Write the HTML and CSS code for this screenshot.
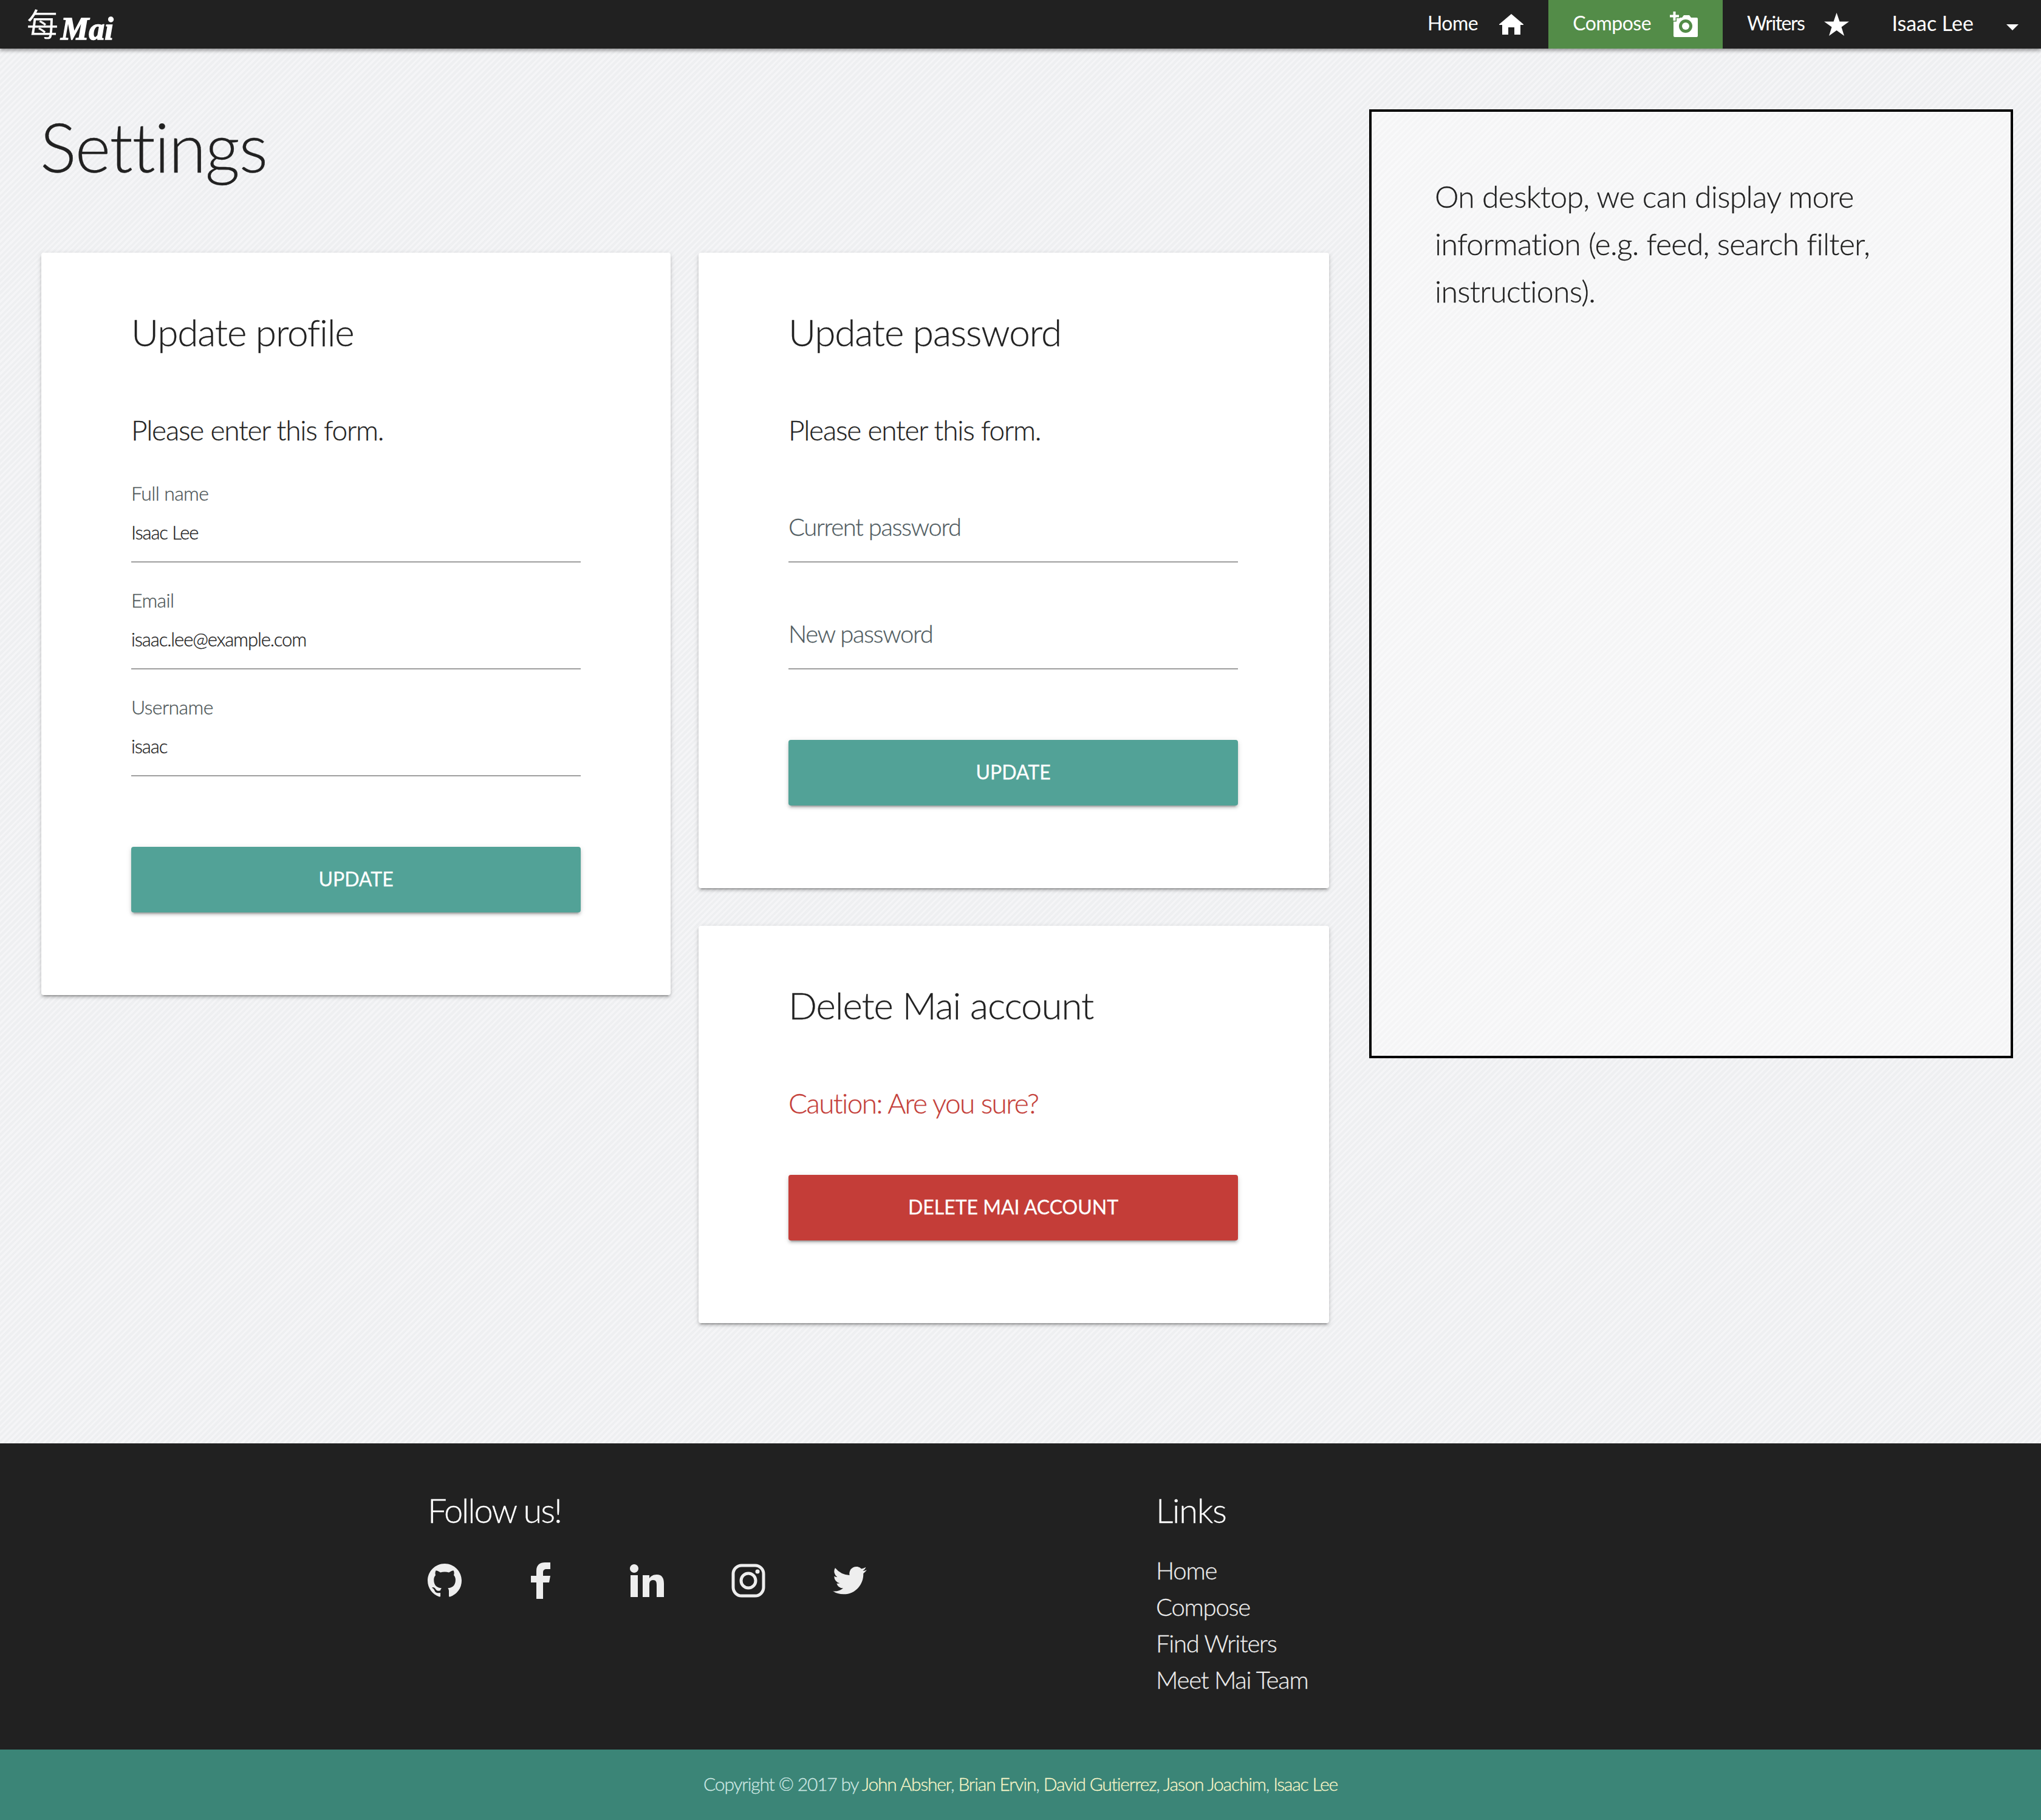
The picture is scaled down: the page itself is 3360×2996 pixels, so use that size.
FILE: index.html
```
<!DOCTYPE html>
<html lang="en">
<head>
  <meta charset="utf-8">
  <title>Mai - Settings</title>
  <link rel="stylesheet" href="styles.css">
</head>
<body>

  <nav class="navbar">
    <a class="logo" href="#"><span class="logo-han">每</span><span class="logo-word">Mai</span></a>
    <ul class="nav-links">
      <li class="nav-item nav-home">
        <a href="#">Home</a>
        <svg class="nav-icon" width="40" height="34" viewBox="0 0 40 34"><path fill="#fff" d="M20 0 L40 17 V18 H35 V34 H25 V22 H15 V34 H5 V18 H0 V17 Z"/></svg>
      </li>
      <li class="nav-item nav-compose">
        <a href="#">Compose</a>
        <svg class="nav-icon" width="46" height="42" viewBox="0 0 46 42">
          <path fill="#fff" d="M8 10h12l3-4h9l3 4h9q2 0 2 2v28q0 2-2 2H8q-2 0-2-2V12q0-2 2-2z"/>
          <circle cx="26" cy="24" r="11" fill="#538c48"/>
          <circle cx="26" cy="24" r="6" fill="#fff"/>
          <path fill="#fff" stroke="#538c48" stroke-width="3" paint-order="stroke" d="M5.500 0h4v5.500H15v4H9.500V15h-4V9.500H0v-4h5.500z"/>
        </svg>
      </li>
      <li class="nav-item nav-writers">
        <a href="#">Writers</a>
        <svg class="nav-icon" width="41" height="38" viewBox="0 0 41 38"><path fill="#fff" d="M20.500 0 L25.500 14.500 H41 L28.500 23.500 L33 38 L20.500 29 L8 38 L12.500 23.500 L0 14.500 H15.500 Z"/></svg>
      </li>
      <li class="nav-item nav-user">
        <a href="#">Isaac Lee</a>
        <span class="caret"></span>
      </li>
    </ul>
  </nav>

  <main class="page">
    <section class="content">
      <h1 class="page-title">Settings</h1>
      <div class="card-grid">
        <div class="card-col">
          <form class="card">
            <h3 class="card-title">Update profile</h3>
            <p class="card-text">Please enter this form.</p>
            <div class="field">
              <label class="field-label">Full name</label>
              <div class="field-value">Isaac Lee</div>
            </div>
            <div class="field">
              <label class="field-label">Email</label>
              <div class="field-value">isaac.lee@example.com</div>
            </div>
            <div class="field">
              <label class="field-label">Username</label>
              <div class="field-value">isaac</div>
            </div>
            <button class="btn" type="button">Update</button>
          </form>
        </div>
        <div class="card-col card-col-wide">
          <form class="card">
            <h3 class="card-title">Update password</h3>
            <p class="card-text">Please enter this form.</p>
            <div class="field">
              <div class="field-placeholder">Current password</div>
            </div>
            <div class="field">
              <div class="field-placeholder">New password</div>
            </div>
            <button class="btn" type="button">Update</button>
          </form>
          <form class="card">
            <h3 class="card-title">Delete Mai account</h3>
            <p class="card-text card-caution">Caution: Are you sure?</p>
            <button class="btn btn-danger" type="button">Delete Mai account</button>
          </form>
        </div>
      </div>
    </section>
    <aside class="sidebar">
      <p>On desktop, we can display more information (e.g. feed, search filter, instructions).</p>
    </aside>
  </main>

  <footer>
    <div class="footer-main">
      <div class="follow">
        <h4 class="footer-title">Follow us!</h4>
        <div class="social">
          <svg width="56" height="56" viewBox="0 0 16 16"><path fill="#eee" d="M8 0C3.580 0 0 3.580 0 8c0 3.540 2.290 6.530 5.470 7.590.4.070.55-.17.55-.38 0-.19-.01-.82-.01-1.490-2.010.37-2.530-.49-2.690-.94-.09-.23-.48-.94-.82-1.130-.28-.15-.68-.52-.01-.53.630-.01 1.080.58 1.230.82.720 1.210 1.870.87 2.330.66.070-.52.280-.87.510-1.070-1.780-.2-3.640-.89-3.640-3.950 0-.87.310-1.590.82-2.150-.08-.2-.36-1.020.08-2.120 0 0 .67-.21 2.200.82.640-.18 1.320-.27 2-.27s1.360.09 2 .27c1.530-1.040 2.200-.82 2.200-.82.440 1.100.160 1.920.08 2.120.51.560.82 1.270.82 2.150 0 3.070-1.870 3.750-3.650 3.950.29.250.54.730.54 1.480 0 1.070-.01 1.930-.01 2.200 0 .21.150.46.550.38A8.010 8.010 0 0 0 16 8c0-4.420-3.580-8-8-8z"/></svg>
          <svg class="social-f" width="32" height="60" viewBox="0 0 32 60"><path fill="#eee" d="M9 60V33H0V22h9v-8C9 4 15 0 23 0h9v11h-6c-4 0-6 2-6 5v6h12l-2 11H20v27z"/></svg>
          <svg class="social-in" width="56" height="54" viewBox="0 0 56 54"><path fill="#eee" d="M1 18h12v36H1z M7 0a7 7 0 1 1-0.010 0z M21 18h11v5c2-3 6-6 12-6 9 0 12 6 12 15v22H44V34c0-5-1-8-6-8s-6 4-6 8v20H21z"/></svg>
          <svg width="56" height="56" viewBox="0 0 56 56"><rect x="3" y="3" width="50" height="50" rx="14" fill="none" stroke="#eee" stroke-width="5"/><circle cx="28" cy="28" r="12" fill="none" stroke="#eee" stroke-width="5"/><circle cx="43" cy="13" r="3.500" fill="#eee"/></svg>
          <svg width="56" height="48" viewBox="0 0 24 20"><path fill="#eee" d="M24 2.400a9.800 9.800 0 0 1-2.830.78A4.940 4.940 0 0 0 23.340.46a9.900 9.900 0 0 1-3.130 1.190 4.930 4.930 0 0 0-8.390 4.490A14 14 0 0 1 1.670.99a4.930 4.930 0 0 0 1.520 6.570 4.900 4.900 0 0 1-2.230-.62v.06a4.930 4.930 0 0 0 3.950 4.830 4.900 4.900 0 0 1-2.220.08 4.930 4.930 0 0 0 4.600 3.420A9.880 9.880 0 0 1 0 17.370 13.940 13.940 0 0 0 7.550 19.580c9.060 0 14-7.500 14-14 0-.21 0-.42-.01-.64A10 10 0 0 0 24 2.400z"/></svg>
        </div>
      </div>
      <div class="links">
        <h4 class="footer-title footer-title-links">Links</h4>
        <ul class="link-list">
          <li><a href="#">Home</a></li>
          <li><a href="#">Compose</a></li>
          <li><a href="#">Find Writers</a></li>
          <li><a href="#">Meet Mai Team</a></li>
        </ul>
      </div>
    </div>
    <div class="copyright">Copyright © 2017 by <a href="#">John Absher</a>, <a href="#">Brian Ervin</a>, <a href="#">David Gutierrez</a>, <a href="#">Jason Joachim</a>, <a href="#">Isaac Lee</a></div>
  </footer>

</body>
</html>
```
FILE: styles.css
```
* {
  box-sizing: border-box;
}

body {
  margin: 0;
  font-family: "Lato", "Open Sans", sans-serif;
  font-weight: 300;
  font-variant-ligatures: none;
  -webkit-text-stroke: 0.3px;
  color: #212121;
  background-color: #f0f1f3;
  background-image: repeating-linear-gradient(135deg, rgba(255,255,255,0.3) 0, rgba(255,255,255,0.3) 3px, rgba(0,0,0,0.008) 3px, rgba(0,0,0,0.008) 7px);
}

a {
  color: inherit;
  text-decoration: none;
}

.navbar {
  height: 80px;
  background: #212121;
  display: flex;
  justify-content: space-between;
  box-shadow: 0 3px 6px rgba(0, 0, 0, 0.4);
  color: #fff;
  font-size: 32px;
  font-weight: 400;
  -webkit-text-stroke: 0;
}

.logo {
  display: flex;
  align-items: flex-end;
  padding: 0 0 12px 44px;
}

.logo-han {
  align-self: flex-start;
  font-family: "Noto Sans CJK SC", sans-serif;
  font-weight: 400;
  font-size: 52px;
  line-height: 75px;
  margin-right: 4px;
}

.logo-word {
  font-family: "Liberation Serif", serif;
  font-style: italic;
  font-weight: 700;
  font-size: 52px;
  line-height: 40px;
  -webkit-text-stroke: 1.5px #fff;
}

.nav-links {
  list-style: none;
  display: flex;
  margin: 0;
  padding: 0;
  height: 80px;
}

.nav-item {
  display: flex;
  align-items: center;
  gap: 35px;
  padding: 0 41px;
  letter-spacing: -0.5px;
}

.nav-item a {
  margin-bottom: 6px;
}

.nav-compose {
  background: #538c48;
  gap: 31px;
  padding-left: 40px;
}

.nav-writers {
  padding: 0 0 0 40px;
  gap: 33px;
  letter-spacing: -1.5px;
}

.nav-user {
  font-size: 34px;
  letter-spacing: 0;
  gap: 54px;
  padding: 0 37px 0 70px;
}

.caret {
  width: 0;
  height: 0;
  border-left: 10px solid transparent;
  border-right: 10px solid transparent;
  border-top: 10px solid #fff;
  margin-top: 10px;
}

.page {
  display: flex;
  align-items: flex-start;
  gap: 66px;
  padding: 0 46px 198px 68px;
}

.content {
  width: 2120px;
}

.page-title {
  margin: 0 0 0 -2px;
  height: 336px;
  padding-top: 101px;
  font-size: 112px;
  line-height: 120px;
  font-weight: 300;
  letter-spacing: -1.5px;
}

.card-grid {
  display: grid;
  grid-template-columns: 1036px 1038px;
  gap: 46px;
  align-items: start;
}

.card-col {
  display: flex;
  flex-direction: column;
  gap: 62px;
}

.card {
  background: #fff;
  border-radius: 4px;
  padding: 92px 148px 136px;
  box-shadow: 0 4px 4px rgba(0,0,0,0.14), 0 6px 2px -4px rgba(0,0,0,0.2), 0 2px 10px rgba(0,0,0,0.12);
}

.card-col-wide .card {
  padding-right: 150px;
}

.card-title {
  margin: 0 0 92px;
  font-size: 62px;
  line-height: 76px;
  font-weight: 300;
  letter-spacing: -1.1px;
}

.card-text {
  margin: 0 0 10px;
  font-size: 46px;
  line-height: 64px;
  font-weight: 300;
  letter-spacing: -1.2px;
}

.card-caution {
  color: #c43d38;
  margin-bottom: 86px;
  letter-spacing: -1.6px;
}

.field {
  height: 176px;
  display: flex;
  flex-direction: column;
  justify-content: flex-end;
}

.field-label {
  font-size: 32px;
  line-height: 40px;
  letter-spacing: -0.6px;
  color: #4c5557;
}

.field-value {
  margin-top: 24px;
  height: 70px;
  font-size: 31px;
  line-height: 40px;
  letter-spacing: -1.1px;
  border-bottom: 2px solid #9e9e9e;
}

.field-placeholder {
  height: 83px;
  font-size: 40px;
  line-height: 48px;
  letter-spacing: -1.4px;
  color: #4f5b5f;
  border-bottom: 2px solid #9e9e9e;
}

.btn {
  display: block;
  width: 100%;
  height: 108px;
  margin-top: 116px;
  padding: 0 0 4px;
  border: 0;
  border-radius: 4px;
  background: #52a297;
  color: #fff;
  font-family: inherit;
  font-size: 32px;
  font-weight: 400;
  text-transform: uppercase;
  box-shadow: 0 4px 4px rgba(0,0,0,0.14), 0 6px 2px -4px rgba(0,0,0,0.2), 0 2px 10px rgba(0,0,0,0.12);
}

.btn-danger {
  background: #c43d38;
  margin-top: 0;
}

.sidebar {
  width: 1060px;
  height: 1562px;
  margin-top: 100px;
  border: 4px solid #000;
  padding: 100px 104px;
  background: rgba(255, 255, 255, 0.4);
  font-size: 50px;
  line-height: 78px;
  letter-spacing: -0.7px;
}

.sidebar p {
  margin: 0;
}

.footer-main {
  height: 504px;
  background: #212121;
  color: #fff;
  display: flex;
  padding: 72px 0 0 704px;
}

.follow {
  width: 1199px;
}

.footer-title {
  margin: 0;
  font-size: 56px;
  line-height: 76px;
  font-weight: 300;
  letter-spacing: -2.2px;
}

.footer-title-links {
  letter-spacing: -1.3px;
}

.social {
  display: flex;
  align-items: center;
  gap: 111px;
  margin-top: 43px;
  height: 70px;
}

.social-f {
  margin-left: 3px;
}

.social-in {
  margin-left: 20px;
}

.link-list {
  list-style: none;
  margin: 31px 0 0;
  padding: 0;
  font-size: 40px;
  line-height: 60px;
  letter-spacing: -1.2px;
  color: #eee;
}

.copyright {
  height: 116px;
  background: #3b8577;
  color: #cfe8e4;
  font-size: 30px;
  line-height: 112px;
  letter-spacing: -1.17px;
  text-align: center;
}

.copyright a {
  color: #f9f6c9;
}
```
